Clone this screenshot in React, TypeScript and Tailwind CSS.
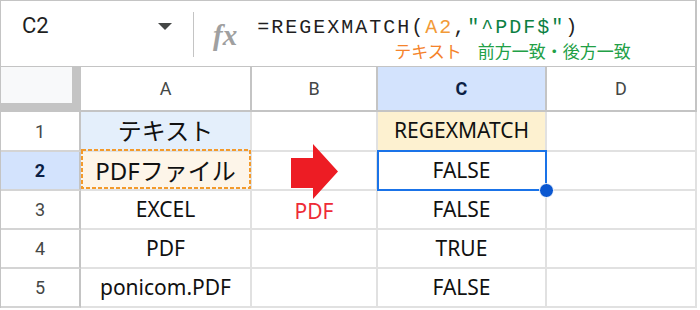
export default function App() {
  const dataFont = { fontFamily: "'Noto Sans', 'Noto Sans CJK JP', sans-serif" };
  const cell =
    "relative flex items-center justify-center border-r-2 border-b-2 border-[#e1e1e1] text-[21px] text-[#111]";
  const rowHdr =
    "flex items-center justify-center border-r-2 border-b-2 border-r-[#c4c4c4] border-b-[#d4d4d4] text-[18px] text-[#444746] font-['Roboto']";
  const colHdr =
    "flex items-center justify-center border-r-2 border-b-2 border-[#c4c4c4] text-[18px] text-[#444746] font-['Roboto']";

  return (
    <div className="w-[700px] h-[310px] bg-white">
      <div className="w-[697px] border-l border-t border-[#c4c4c4] flex flex-col">
        {/* formula bar */}
        <div className="h-[66px] border-b border-[#c4c4c4] border-r-2 border-r-[#c4c4c4] flex items-start">
          <div className="w-[192px] h-full flex items-start justify-between pl-[21px] pr-[21px]">
            <span className="mt-[14px] font-['Roboto'] text-[22px] text-[#1f1f1f] leading-none">C2</span>
            <svg className="mt-[22px]" width="14" height="7" viewBox="0 0 14 7">
              <polygon points="0,0 14,0 7,7" fill="#444746" />
            </svg>
          </div>
          <div className="w-px h-[45px] mt-[11px] bg-[#c4c4c4]" />
          <div className="ml-[19px] mt-[20px] font-['Liberation_Serif'] italic font-bold text-[29px] leading-none text-[#a0a0a0]">
            fx
          </div>
          <div className="ml-[20px] flex flex-col">
            <div className="mt-[14px] font-['Liberation_Mono'] text-[20px] leading-[26px] tracking-[2px] text-[#1f1f1f] whitespace-pre">
              =REGEXMATCH(<span className="text-[#f29a38]">A2</span>,
              <span className="text-[#0b8043]">"^PDF$"</span>)
            </div>
            <div
              className="mt-0 pl-[137px] flex gap-[16px] text-[17px] leading-[20px]"
              style={{ fontFamily: "'Noto Sans CJK JP', sans-serif" }}
            >
              <span className="text-[#f5832b]">テキスト</span>
              <span className="text-[#22a046]">前方一致・後方一致</span>
            </div>
          </div>
        </div>

        {/* grid */}
        <div className="grid grid-cols-[80px_171px_126px_169px_150px] grid-rows-[45px_40px_39px_39px_39px_39px]">
          {/* header row */}
          <div className="border-r-2 border-b-2 border-[#c4c4c4] flex">
            <div className="flex-1 bg-[#f8f9fa] border-r-[7px] border-b-[7px] border-[#c4c4c4]" />
          </div>
          <div className={colHdr}>A</div>
          <div className={colHdr}>B</div>
          <div className={`${colHdr} bg-[#d3e3fd]`}>
            <span className="font-bold text-[#0b1f45]">C</span>
          </div>
          <div className={colHdr}>D</div>

          {/* row 1 */}
          <div className={rowHdr}>1</div>
          <div className={`${cell} bg-[#e4effb] text-[24px]`} style={dataFont}>
            テキスト
          </div>
          <div className={cell} />
          <div className={`${cell} bg-[#fdf1d0]`} style={dataFont}>
            REGEXMATCH
          </div>
          <div className={cell} />

          {/* row 2 */}
          <div className={`${rowHdr} bg-[#d3e3fd]`}>
            <span className="font-bold text-[#0b1f45]">2</span>
          </div>
          <div className={`${cell} bg-[#fdf5e9] text-[24px]`} style={dataFont}>
            PDFファイル
            <svg className="absolute left-0 top-[-3px]" width="170" height="40" viewBox="0 0 170 40">
              <rect x="1" y="1" width="168" height="38" fill="none" stroke="#f39a2b" strokeWidth="2" strokeDasharray="4 2" />
            </svg>
          </div>
          <div className={cell}>
            <svg className="absolute left-[39px] top-[-8px] z-10" width="47" height="55" viewBox="0 0 47 55">
              <polygon points="0,14 22,14 22,0 47,27.5 22,55 22,44 0,44" fill="#ed1c24" />
            </svg>
          </div>
          <div className={cell} style={dataFont}>
            FALSE
            <div className="absolute top-[-2px] left-[-1px] right-[-2px] bottom-[-2px] border-2 border-[#1a73e8]" />
            <div className="absolute left-[161px] top-[31px] w-[15px] h-[15px] rounded-full bg-[#0b57d0] border border-white z-20" />
          </div>
          <div className={cell} />

          {/* row 3 */}
          <div className={rowHdr}>3</div>
          <div className={cell} style={dataFont}>EXCEL</div>
          <div className={`${cell} text-[16px] text-[#ee2b36]`} style={dataFont}>
            <span className="mt-[4px]">PDF</span>
          </div>
          <div className={cell} style={dataFont}>FALSE</div>
          <div className={cell} />

          {/* row 4 */}
          <div className={rowHdr}>4</div>
          <div className={cell} style={dataFont}>PDF</div>
          <div className={cell} />
          <div className={cell} style={dataFont}>TRUE</div>
          <div className={cell} />

          {/* row 5 */}
          <div className={rowHdr}>5</div>
          <div className={cell} style={dataFont}>ponicom.PDF</div>
          <div className={cell} />
          <div className={cell} style={dataFont}>FALSE</div>
          <div className={cell} />
        </div>
      </div>
    </div>
  );
}
